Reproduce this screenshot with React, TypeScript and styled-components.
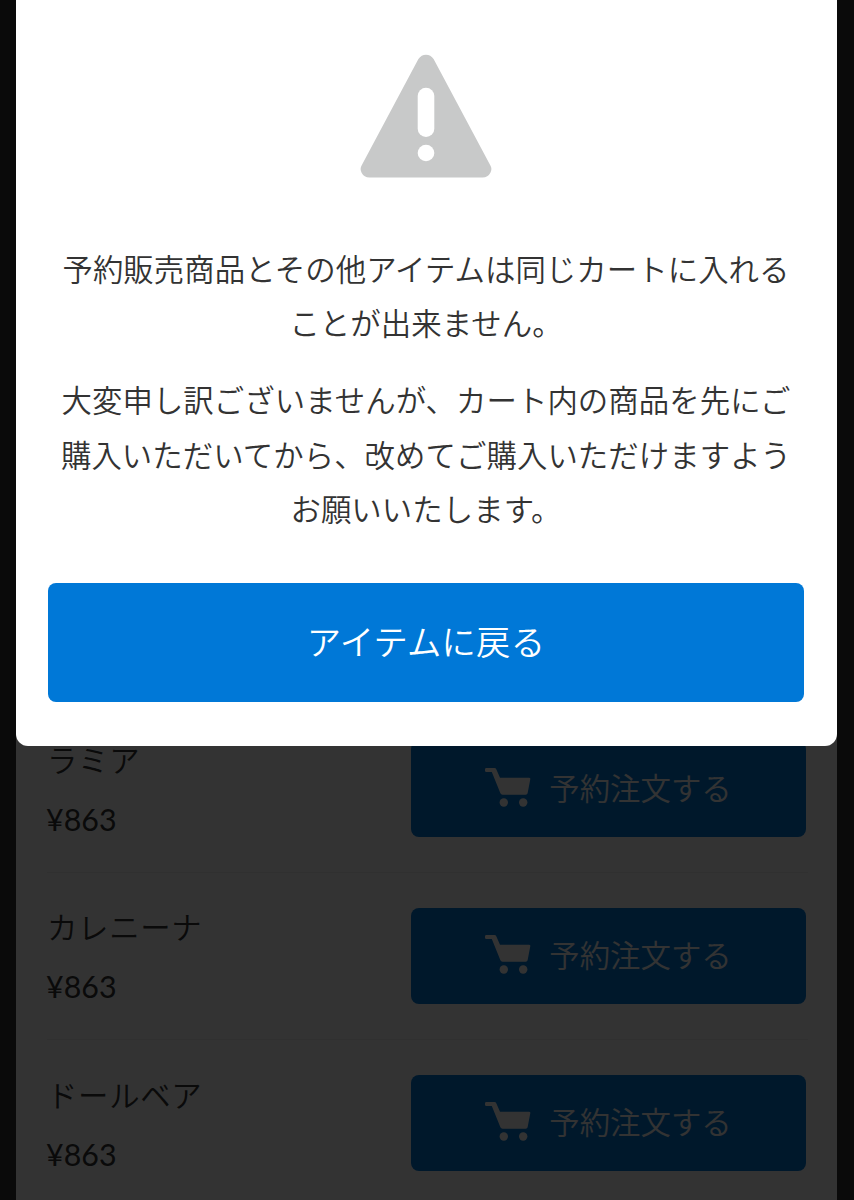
import React from "react";
import styled, { createGlobalStyle } from "styled-components";

const GlobalStyle = createGlobalStyle`
  * { box-sizing: border-box; }
  html, body { margin: 0; height: 1200px; overflow: hidden; background: #333; }
  body {
    font-family: Lato, "Noto Sans CJK JP", sans-serif;
    font-size: 30.4px;
    color: #333;
  }
  p { margin: 0; }
  button { font-family: inherit; border: 0; padding: 0; }
`;

const Page = styled.div`
  position: relative;
  height: 1200px;
  overflow: hidden;
  background: #333;
`;

const Sheet = styled.main`
  width: 820.5px;
  height: 1200px;
  margin-left: 16px;
  padding: 705.6px 29px 0 31px;
  overflow: hidden;
  background: #fff;
`;

const VariationList = styled.ul`
  margin: 0;
  padding: 0;
  list-style: none;
`;

const Variation = styled.li`
  display: flex;
  align-items: center;
  justify-content: space-between;
  height: 167.3px;
  border-bottom: 1px solid #eee;
`;

const Details = styled.div`
  padding-top: 0.5px;
  line-height: 60px;
`;

const Name = styled.p`
  letter-spacing: 0.7px;
  font-family: "Noto Sans CJK JP", sans-serif;
  font-weight: 350;
`;

const Price = styled.p`
  margin-left: -1px;
`;

const OrderButton = styled.button`
  display: flex;
  align-items: center;
  justify-content: center;
  gap: 18px;
  width: 395px;
  height: 96px;
  margin-right: 1.5px;
  border-radius: 8px;
  background: #0078d7;
  color: #fff;
  font-size: 30.4px;
  font-weight: 350;
`;

const ButtonText = styled.span`
  padding-bottom: 4px;
`;

const CartIcon = styled.svg`
  width: 46px;
  height: 39px;
  margin-bottom: 3px;
`;

const Overlay = styled.div`
  position: absolute;
  inset: 0;
  background: rgba(0, 0, 0, 0.8);
`;

const Modal = styled.section`
  display: flex;
  flex-direction: column;
  align-items: center;
  width: 820.5px;
  height: 745.5px;
  margin-left: 16px;
  padding: 54px 32.5px 0 32px;
  border-radius: 0 0 12px 12px;
  background: #fff;
`;

const WarningIcon = styled.svg`
  width: 132px;
  height: 124px;
  flex: none;
`;

const Message = styled.div`
  display: flex;
  flex-direction: column;
  gap: 22px;
  width: 742px;
  margin-top: 63.6px;
  font-weight: 350;
  line-height: 54.7px;
  letter-spacing: 0.07px;
  text-align: center;
`;

const BackButton = styled.button`
  flex: none;
  width: 756px;
  height: 119.3px;
  margin-top: 45.4px;
  padding-bottom: 4px;
  border-radius: 8px;
  background: #0078d7;
  color: #fff;
  font-size: 34.3px;
  font-weight: 350;
  letter-spacing: 0.25px;
`;

const variations = [
  { name: "ラミア", price: "¥863" },
  { name: "カレニーナ", price: "¥863" },
  { name: "ドールベア", price: "¥863" },
];

export default function App() {
  return (
    <Page>
      <GlobalStyle />
      <Sheet>
        <VariationList>
          {variations.map((v) => (
            <Variation key={v.name}>
              <Details>
                <Name>{v.name}</Name>
                <Price>{v.price}</Price>
              </Details>
              <OrderButton>
                <CartIcon viewBox="0 0 46 39" fill="#fff" aria-hidden="true">
                  <path d="M1.4 0H9.3Q10.8 0 11.4 1.4L15 9.7H44Q45.6 9.7 45.3 11.3L42.6 25.3Q42.3 26.7 40.8 26.7H17.5Q16 26.7 15.4 25.3L6.8 4H1.4Q0 4 0 2.7V1.4Q0 0 1.4 0Z" />
                  <circle cx="18.8" cy="34.5" r="4.2" />
                  <circle cx="38.2" cy="34.5" r="4.2" />
                </CartIcon>
                <ButtonText>予約注文する</ButtonText>
              </OrderButton>
            </Variation>
          ))}
        </VariationList>
      </Sheet>
      <Overlay>
        <Modal role="dialog">
          <WarningIcon viewBox="0 0 132 124" aria-hidden="true">
            <path
              fill="#c8c9c9"
              d="M58.4 5Q61.3 0.7 66 0.7Q70.7 0.7 73.6 5L130.4 111.5Q132.4 115 130.4 118.8Q128 123.6 122.5 123.6H9.5Q4 123.6 1.6 118.8Q-0.4 115 1.6 111.5Z"
            />
            <rect x="57.7" y="33.7" width="16.6" height="49.3" rx="8.3" fill="#fff" />
            <circle cx="66" cy="99" r="8.3" fill="#fff" />
          </WarningIcon>
          <Message>
            <p>予約販売商品とその他アイテムは同じカートに入れることが出来ません。</p>
            <p>
              大変申し訳ございませんが、カート内の商品を先にご購入いただいてから、改めてご購入いただけますようお願いいたします。
            </p>
          </Message>
          <BackButton>アイテムに戻る</BackButton>
        </Modal>
      </Overlay>
    </Page>
  );
}
